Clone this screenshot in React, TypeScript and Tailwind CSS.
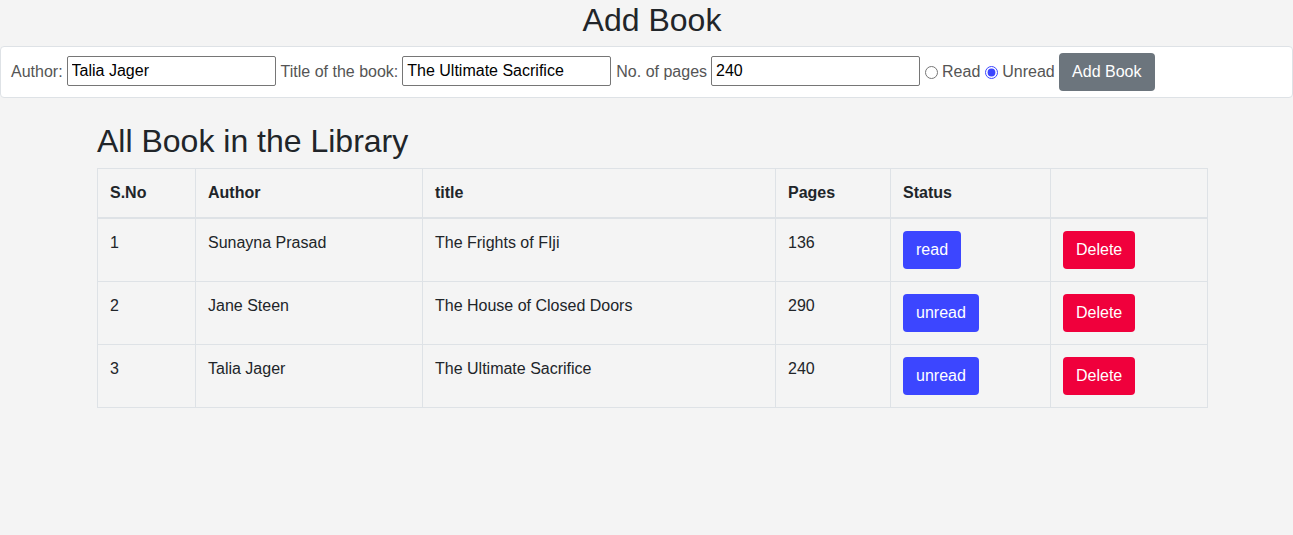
import { useState } from 'react';

type Book = { id: number; author: string; title: string; pages: number; read: boolean };

const initialBooks: Book[] = [
  { id: 1, author: 'Sunayna Prasad', title: 'The Frights of FIji', pages: 136, read: true },
  { id: 2, author: 'Jane Steen', title: 'The House of Closed Doors', pages: 290, read: false },
  { id: 3, author: 'Talia Jager', title: 'The Ultimate Sacrifice', pages: 240, read: false }
];

export default function App() {
  const [books, setBooks] = useState(initialBooks);
  const [author, setAuthor] = useState('Talia Jager');
  const [title, setTitle] = useState('The Ultimate Sacrifice');
  const [pages, setPages] = useState('240');
  const [read, setRead] = useState(false);

  const toggle = (id: number) =>
    setBooks((b) => b.map((x) => (x.id === id ? { ...x, read: !x.read } : x)));
  const remove = (id: number) => setBooks((b) => b.filter((x) => x.id !== id));

  const inputCls =
    'w-[209px] h-[30px] mb-[2px] border border-[#767676] rounded-[2px] bg-white px-[4px] text-[16px] text-black outline-none';

  return (
    <div className="min-h-[535px] bg-[#f4f4f4] text-[#212529] font-['Liberation_Sans',Arial,sans-serif]">
      <h1 className="text-center text-[32px] leading-[38px] pt-[1px] pl-[11px] mb-[7px] font-normal">Add Book</h1>

      <form
        onSubmit={(e) => e.preventDefault()}
        className="flex items-center bg-white border border-[#dee2e6] rounded-[4px] pl-[10px] py-[6px] text-[16px] text-[#555]"
      >
        <label className="mr-[4px]">Author:</label>
        <input className={inputCls} value={author} onChange={(e) => setAuthor(e.target.value)} />
        <label className="ml-[5px] mr-[4px]">Title of the book:</label>
        <input className={inputCls} value={title} onChange={(e) => setTitle(e.target.value)} />
        <label className="ml-[5px] mr-[4px]">No. of pages</label>
        <input className={inputCls} value={pages} onChange={(e) => setPages(e.target.value)} />
        <input
          type="radio"
          name="status"
          checked={read}
          onChange={() => setRead(true)}
          className="ml-[5px] mr-[4px] w-[13px] h-[13px] accent-[#3c46ff]"
        />
        <span>Read</span>
        <input
          type="radio"
          name="status"
          checked={!read}
          onChange={() => setRead(false)}
          className="ml-[5px] mr-[4px] w-[13px] h-[13px] accent-[#3c46ff]"
        />
        <span>Unread</span>
        <button
          type="submit"
          className="ml-[4px] h-[38px] w-[96px] rounded-[4px] bg-[#6c757d] text-white text-[16px]"
        >
          Add Book
        </button>
      </form>

      <div className="ml-[97px] w-[1110px] mt-[24px]">
        <h2 className="text-[32px] leading-[38px] font-normal mb-[8px]">All Book in the Library</h2>
        <table className="w-[1110px] table-fixed border-collapse border border-[#dee2e6] text-[16px]">
          <colgroup>
            <col className="w-[98px]" />
            <col className="w-[227px]" />
            <col className="w-[353px]" />
            <col className="w-[115px]" />
            <col className="w-[160px]" />
            <col className="w-[157px]" />
          </colgroup>
          <thead>
            <tr className="border-b-2 border-[#dee2e6]">
              {['S.No', 'Author', 'title', 'Pages', 'Status', ''].map((h, i) => (
                <th
                  key={i}
                  className="border border-[#dee2e6] border-b-2 p-[12px] text-left font-bold leading-[24px] align-bottom"
                >
                  {h}
                </th>
              ))}
            </tr>
          </thead>
          <tbody>
            {books.map((b) => (
              <tr key={b.id}>
                <td className="border border-[#dee2e6] p-[12px] align-top leading-[24px]">{b.id}</td>
                <td className="border border-[#dee2e6] p-[12px] align-top leading-[24px]">{b.author}</td>
                <td className="border border-[#dee2e6] p-[12px] align-top leading-[24px]">{b.title}</td>
                <td className="border border-[#dee2e6] p-[12px] align-top leading-[24px]">{b.pages}</td>
                <td className="border border-[#dee2e6] p-[12px] align-top">
                  <button
                    onClick={() => toggle(b.id)}
                    className="h-[38px] px-[13px] rounded-[4px] bg-[#3c46ff] text-white leading-[24px]"
                  >
                    {b.read ? 'read' : 'unread'}
                  </button>
                </td>
                <td className="border border-[#dee2e6] p-[12px] align-top">
                  <button
                    onClick={() => remove(b.id)}
                    className="h-[38px] px-[13px] rounded-[4px] bg-[#f0003c] text-white leading-[24px]"
                  >
                    Delete
                  </button>
                </td>
              </tr>
            ))}
          </tbody>
        </table>
      </div>
    </div>
  );
}
